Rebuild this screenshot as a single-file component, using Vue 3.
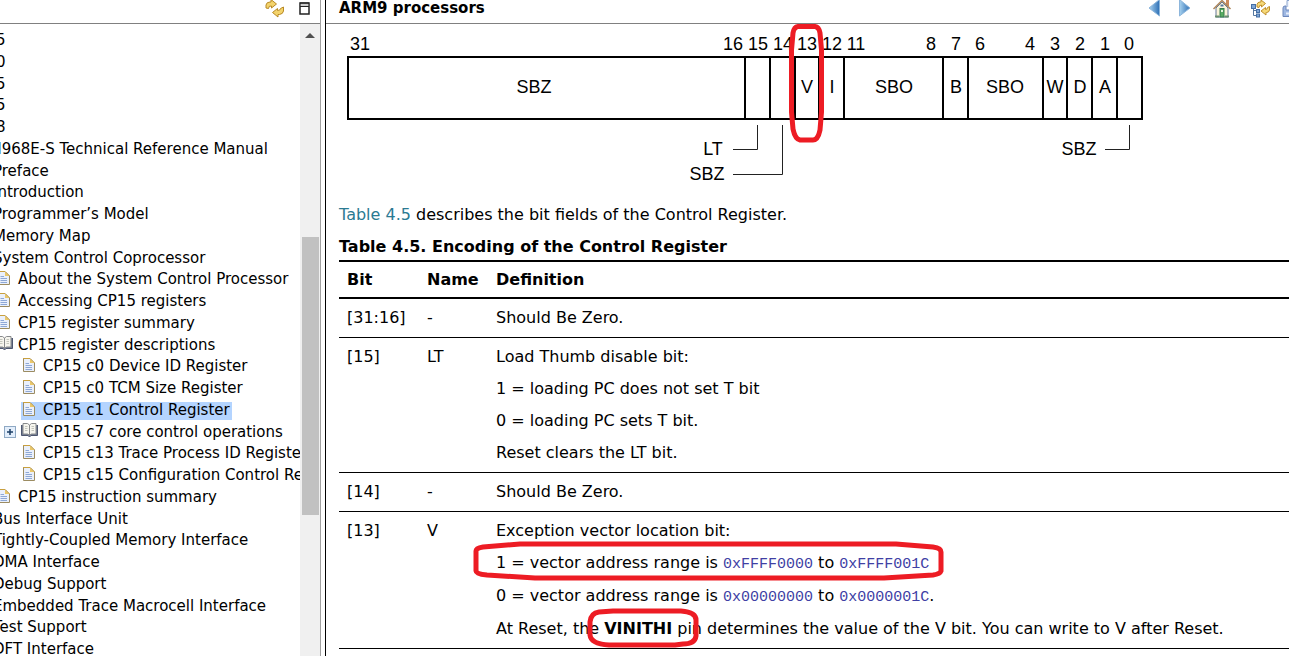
<script setup>
import { ref } from 'vue'

const selected = ref('CP15 c1 Control Register')

const tree = [
  { text: '5', level: 1, tail: true },
  { text: '0', level: 1, tail: true },
  { text: '5', level: 1, tail: true },
  { text: '5', level: 1, tail: true },
  { text: '8', level: 1, tail: true },
  { text: 'ARM968E-S Technical Reference Manual', level: 0 },
  { text: 'Preface', level: 1 },
  { text: 'Introduction', level: 1 },
  { text: 'Programmer’s Model', level: 1 },
  { text: 'Memory Map', level: 1 },
  { text: 'System Control Coprocessor', level: 1 },
  { text: 'About the System Control Processor', level: 2, icon: 'page' },
  { text: 'Accessing CP15 registers', level: 2, icon: 'page' },
  { text: 'CP15 register summary', level: 2, icon: 'page' },
  { text: 'CP15 register descriptions', level: 2, icon: 'book' },
  { text: 'CP15 c0 Device ID Register', level: 3, icon: 'page' },
  { text: 'CP15 c0 TCM Size Register', level: 3, icon: 'page' },
  { text: 'CP15 c1 Control Register', level: 3, icon: 'page' },
  { text: 'CP15 c7 core control operations', level: 3, icon: 'book', closed: true },
  { text: 'CP15 c13 Trace Process ID Register', level: 3, icon: 'page' },
  { text: 'CP15 c15 Configuration Control Register', level: 3, icon: 'page' },
  { text: 'CP15 instruction summary', level: 2, icon: 'page' },
  { text: 'Bus Interface Unit', level: 1 },
  { text: 'Tightly-Coupled Memory Interface', level: 1 },
  { text: 'DMA Interface', level: 1 },
  { text: 'Debug Support', level: 1 },
  { text: 'Embedded Trace Macrocell Interface', level: 1 },
  { text: 'Test Support', level: 1 },
  { text: 'DFT Interface', level: 1 },
]

const dividers = [745, 770, 795, 819, 844, 943, 968, 1043, 1067, 1092, 1117]

const bits = [
  ['31', 360], ['16', 733], ['15', 758], ['14', 783], ['13', 807], ['12', 832], ['11', 856],
  ['8', 931], ['7', 956], ['6', 980], ['4', 1030], ['3', 1055], ['2', 1080], ['1', 1105], ['0', 1129],
]

const fields = [
  ['SBZ', 534], ['V', 807], ['I', 832], ['SBO', 894], ['B', 956], ['SBO', 1005],
  ['W', 1055], ['D', 1080], ['A', 1105],
]
</script>

<template>
  <div class="help">
    <nav class="contents" aria-label="Contents">
      <div class="bar bar-left">
        <button type="button" class="tool" aria-label="Link with contents">
          <svg width="20" height="20" viewBox="0 0 20 20">
            <g fill="#f3d36b" stroke="#b98a26" stroke-width="1">
              <path d="M1 8 V5 Q1.500 2 5 2 H6 V-0.500 L11.500 4 L6.500 8 V6 Q3.500 5.500 3.500 8.500 Z" />
              <path d="M18.500 7 V11 Q18 14 14.500 14.500 H13 V17 L7.500 12.500 L12.500 8.500 V10.500 Q15.500 10.500 15.500 8.500 Z" />
            </g>
          </svg>
        </button>
        <button type="button" class="tool" aria-label="Maximize">
          <svg width="12" height="14" viewBox="0 0 12 14">
            <rect x="1" y="1" width="9" height="11" fill="#fff" stroke="#222" stroke-width="1.500" />
            <path d="M1 1 H10 M1 4.500 H10" stroke="#222" />
            <path d="M1.500 3 H9.500" stroke="#999" />
          </svg>
        </button>
      </div>
      <div class="tree-area">
        <ul class="tree">
          <li v-for="(n, i) in tree" :key="i" :class="['row', 'level-' + n.level, { tail: n.tail }]">
            <span class="twisty">
              <button v-if="n.closed" type="button" class="tool" aria-label="Expand">
                <svg width="12" height="12" viewBox="0 0 12 12">
                  <rect x="0.500" y="0.500" width="11" height="11" fill="#e3eefb" stroke="#8fa9c4" />
                  <path d="M3 6 H9 M6 3 V9" stroke="#1d3f66" stroke-width="1.500" />
                </svg>
              </button>
            </span>
            <a href="#" class="label" :class="{ selected: selected === n.text }" @click.prevent="selected = n.text">
              <svg class="icon" width="18" height="16" viewBox="0 0 18 16" aria-hidden="true">
                <template v-if="n.icon === 'page'">
                  <path d="M2.500 0.500 H9 L13.500 5 V13.500 H2.500 Z" fill="#eaf0fb" stroke="#9c8c62" />
                  <path d="M2 0.500 H9 L13.500 5" fill="none" stroke="#c9a03f" />
                  <path d="M9 1 V5 H13 Z" fill="#ecc869" />
                  <path d="M4.500 5.500 H8 M4.500 7.500 H11 M4.500 9.500 H11 M4.500 11.500 H11" stroke="#8ea8d6" />
                </template>
                <template v-else-if="n.icon === 'book'">
                  <path d="M0.500 2 V12.500 H7 L8.500 14 L10 12.500 H16.500 V2" fill="#727c94" stroke="#4d566f" />
                  <path d="M2 0.500 H6.500 L8.500 2 V12 L6.500 11 H2 Z" fill="#f6f5ee" stroke="#888a8c" />
                  <path d="M15 0.500 H10.500 L8.500 2 V12 L10.500 11 H15 Z" fill="#f6f5ee" stroke="#888a8c" />
                  <path d="M4 3.500 H6.500 M4 5.500 H6.500 M4 7.500 H6.500 M10.500 3.500 H13 M10.500 5.500 H13 M10.500 7.500 H13" stroke="#c3c5bc" />
                </template>
              </svg>
              <span>{{ n.text }}</span>
            </a>
          </li>
        </ul>
        <div class="scrollbar" aria-hidden="true">
          <svg class="arrow" width="10" height="5" viewBox="0 0 10 5"><path d="M0 5 L5 0 L10 5 Z" fill="#505050" /></svg>
          <div class="thumb"></div>
        </div>
      </div>
    </nav>

    <main class="topic">
      <header class="bar bar-right">
        <h1>ARM9 processors</h1>
        <div class="tools">
          <button type="button" class="tool" aria-label="Back">
            <svg width="16" height="20" viewBox="0 0 16 20">
              <defs>
                <linearGradient id="blue" x1="0" x2="1"><stop offset="0" stop-color="#a9d3f0" /><stop offset="1" stop-color="#2d6fb5" /></linearGradient>
              </defs>
              <path d="M13.500 -0.500 V16 L3 8 Z" fill="url(#blue)" stroke="#8db6dc" />
            </svg>
          </button>
          <button type="button" class="tool" aria-label="Forward">
            <svg width="22" height="20" viewBox="0 0 22 20">
              <path d="M5.500 -0.500 V16 L16 8 Z" fill="url(#blue)" stroke="#8db6dc" />
            </svg>
          </button>
          <button type="button" class="tool" aria-label="Home">
            <svg width="28" height="20" viewBox="0 0 28 20">
              <rect x="18" y="0" width="3" height="6" fill="#c98a5a" />
              <path d="M8 8 L14 2 L20 8 V17 H8 Z" fill="#fbf5da" stroke="#64799a" />
              <path d="M5.500 9 L14 0.500 L22.500 9" fill="none" stroke="#ad875c" stroke-width="1.500" />
              <rect x="12.500" y="4.500" width="3" height="2" fill="#56789f" />
              <rect x="12" y="8.500" width="4" height="8.500" fill="#58ac62" stroke="#397d4c" />
              <rect x="13" y="10" width="2" height="2" fill="#e4f5dc" />
              <path d="M7 16.500 H11 M17 16.500 H21" stroke="#6a8f6f" stroke-width="2" />
            </svg>
          </button>
          <button type="button" class="tool" aria-label="Show in table of contents">
            <svg width="22" height="20" viewBox="0 0 22 20">
              <path d="M5.500 7 V15.500 H9 M5.500 10.500 H9" fill="none" stroke="#55779f" />
              <rect x="3.500" y="4.500" width="4" height="4" fill="#7fa6d6" stroke="#456fa5" />
              <rect x="8.500" y="9.500" width="3" height="3" fill="#7fa6d6" stroke="#456fa5" />
              <rect x="8.500" y="14" width="3" height="3" fill="#7fa6d6" stroke="#456fa5" />
              <g fill="#f6d978" stroke="#c08f2b">
                <path d="M9 7 V4.500 Q9.500 2 12 2 H13 V0 L17.500 3.500 L13.500 7 V5 Q11 5 11 7.500 Z" />
                <path d="M21.500 6.500 V10 Q21 12.500 18.500 12.500 H18 V15 L13 11 L17.500 7.500 V9.500 Q19.500 9.500 19.500 7.500 Z" />
              </g>
            </svg>
          </button>
          <button type="button" class="tool" aria-label="Print">
            <svg width="24" height="20" viewBox="0 0 24 20">
              <path d="M5 7 V0.500 H19 V7" fill="#eef4fd" stroke="#8ba4cd" />
              <path d="M1 8 Q1 6 3 6 H4 V10 H20 V6 H21 Q23 6 23 8 V16.500 H1 Z" fill="#9fb8e2" stroke="#6d87bb" />
              <path d="M4 13.500 H20" stroke="#e5edfa" stroke-width="2" />
            </svg>
          </button>
        </div>
      </header>

      <article class="body">
        <svg class="register" width="820" height="176" viewBox="339 24 820 176" role="img" aria-label="Control Register bit assignments">
          <rect x="348" y="57" width="794" height="62" fill="none" stroke="#000" stroke-width="2" />
          <path v-for="x in dividers" :key="x" :d="`M${x} 57 V119`" stroke="#000" stroke-width="2" />
          <path d="M733 149.500 H757.500 V125 M733 174.500 H782.500 V125 M1105 149.500 H1129.500 V125" fill="none" stroke="#222" />
          <g class="register-text">
            <text v-for="[t, x] in bits" :key="'b' + x" :x="x" y="50">{{ t }}</text>
            <text v-for="[t, x] in fields" :key="'f' + x" :x="x" y="93">{{ t }}</text>
            <text x="713" y="155">LT</text>
            <text x="707" y="180">SBZ</text>
            <text x="1079" y="155">SBZ</text>
          </g>
          <path class="ring" d="M798 26.500 H815 Q819 27 820 33 L821.500 50 V112 L820 130 Q818 140 813 140 H800 Q795 139 793 129 L791.500 112 V50 L793 33 Q794 27 798 26.500 Z" />
        </svg>

        <p class="intro"><a href="#control-register">Table 4.5</a> describes the bit fields of the Control Register.</p>

        <table id="control-register">
          <caption>Table 4.5. Encoding of the Control Register</caption>
          <thead>
            <tr><th class="bit" scope="col">Bit</th><th class="name" scope="col">Name</th><th scope="col">Definition</th></tr>
          </thead>
          <tbody>
            <tr><td>[31:16]</td><td>-</td><td><p>Should Be Zero.</p></td></tr>
            <tr>
              <td>[15]</td><td>LT</td>
              <td>
                <p>Load Thumb disable bit:</p>
                <p>1 = loading PC does not set T bit</p>
                <p>0 = loading PC sets T bit.</p>
                <p>Reset clears the LT bit.</p>
              </td>
            </tr>
            <tr><td>[14]</td><td>-</td><td><p>Should Be Zero.</p></td></tr>
            <tr>
              <td>[13]</td><td>V</td>
              <td>
                <p>Exception vector location bit:</p>
                <p class="range">
                  1 = vector address range is <code>0xFFFF0000</code> to <code>0xFFFF001C</code>
                  <svg class="mark mark-range" width="471" height="40" viewBox="0 0 471 40" aria-hidden="true">
                    <path class="ring" d="M3 10 Q3 7 10 6 L47 3 H423 L460 6 Q468 7 468 11 V30 Q467 33 460 34 L411 37 H62 L14 34 Q3 33 3 30 Z" />
                  </svg>
                </p>
                <p class="range">0 = vector address range is <code>0x00000000</code> to <code>0x0000001C</code>.</p>
                <p>
                  At Reset, the
                  <strong>VINITHI<svg class="mark mark-pin" width="112" height="40" viewBox="0 0 112 40" aria-hidden="true">
                    <path class="ring" d="M12 4 L26 3 H94 Q109 4 109 12 V28 Q108 36 96 36 L88 37 H22 Q4 36 3 27 V14 Q4 5 12 4 Z" />
                  </svg></strong>
                  pin determines the value of the V bit. You can write to V after Reset.
                </p>
              </td>
            </tr>
          </tbody>
        </table>
      </article>
    </main>
  </div>
</template>

<style>
body {
  margin: 0;
  background: #fff;
}
</style>

<style scoped>
.help {
  display: grid;
  grid-template-columns: 321px minmax(0, 1fr);
  column-gap: 4px;
  height: 100vh;
  overflow: hidden;
  color: #000;
  font-family: Verdana, "DejaVu Sans", sans-serif;
  font-size: 16px;
  line-height: 22px;
}

.contents {
  display: flex;
  flex-direction: column;
  min-height: 0;
  border-right: 1px solid #a0a0a0;
}

.bar {
  display: flex;
  flex: none;
  height: 23px;
  border-bottom: 1px solid #808080;
}

.bar-left {
  justify-content: flex-end;
  align-items: flex-start;
  gap: 14px;
  padding-right: 9px;
}

.tool {
  display: block;
  padding: 0;
  border: 0;
  background: none;
  cursor: pointer;
}

.tool svg {
  display: block;
}

.bar-left .tool + .tool {
  padding-top: 2px;
}

.tree-area {
  display: flex;
  flex: 1;
  min-height: 0;
}

.tree {
  flex: 1;
  min-width: 0;
  margin: 0;
  padding: 6px 0 0;
  overflow: hidden;
  list-style: none;
  font-size: 15px;
  line-height: 1.45;
}

.row {
  display: flex;
  align-items: center;
  height: 1lh;
  white-space: nowrap;
}

.level-0 { margin-left: -71px; }
.level-1 { margin-left: -46px; }
.level-2 { margin-left: -21px; }
.level-3 { margin-left: 4px; }
.level-1.tail { margin-left: -43px; }

.twisty {
  flex: none;
  width: 17px;
}

.label {
  display: flex;
  align-items: center;
  gap: 4px;
  height: 18px;
  padding-right: 2px;
  color: #000;
  text-decoration: none;
}

.icon {
  flex: none;
  align-self: flex-start;
}

.selected {
  background: #b4d4ff;
}

.scrollbar {
  display: flex;
  flex: none;
  flex-direction: column;
  align-items: center;
  width: 20px;
  background: #f0f0f0;
}

.arrow {
  margin: 9px 0 0;
}

.thumb {
  width: 17px;
  height: 44%;
  margin-top: 199px;
  background: #c1c1c1;
}

.topic {
  min-width: 0;
  overflow: hidden;
  border-left: 1px solid #000;
}

.bar-right {
  justify-content: space-between;
  padding-left: 13px;
}

h1 {
  margin: 0;
  font-size: 15px;
  line-height: 16px;
}

.tools {
  display: flex;
  align-items: flex-start;
  gap: 12px;
  margin-right: -17px;
}

.body {
  padding-left: 13px;
}

.register {
  display: block;
  overflow: visible;
}

.register-text {
  font-family: "Liberation Sans", Arial, sans-serif;
  font-size: 18px;
  text-anchor: middle;
}

.ring {
  fill: none;
  stroke: #ed1c24;
  stroke-width: 5;
  stroke-linejoin: round;
}

.intro {
  margin: 4px 0 10px;
}

.intro a {
  color: #2b7a92;
  text-decoration: none;
}

table {
  width: 100%;
  border-collapse: separate;
  border-spacing: 0;
}

caption {
  padding-bottom: 2px;
  font-weight: bold;
  text-align: left;
}

th,
td {
  padding: 8px;
  border-bottom: 1px solid #000;
  text-align: left;
  vertical-align: top;
}

th {
  padding: 7px 8px 6px;
  border-top: 2px solid #000;
  border-bottom-width: 2px;
}

.bit { width: 64px; }
.name { width: 53px; }

td p {
  margin: 0;
}

td p + p {
  margin-top: 10px;
}

.range {
  position: relative;
  padding-bottom: 1px;
}

code {
  color: #4040a4;
  font-family: "Liberation Mono", "Courier New", monospace;
  font-size: 15px;
  line-height: 16px;
}

strong {
  position: relative;
}

.mark {
  position: absolute;
  pointer-events: none;
}

.mark-range {
  top: -11px;
  left: -23px;
}

.mark-pin {
  top: -11px;
  left: -17px;
}
</style>
